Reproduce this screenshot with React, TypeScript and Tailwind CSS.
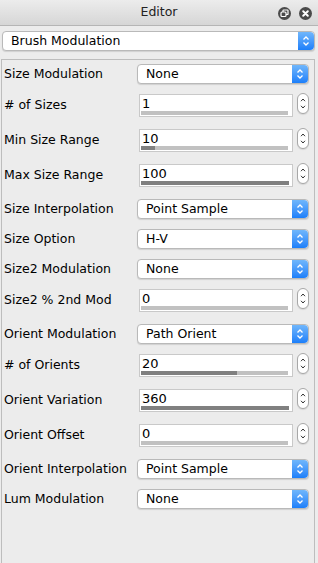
import React from "react";

const font = { fontFamily: '"DejaVu Sans", "Liberation Sans", sans-serif' };

function BlueArrows({ w }: { w: number }) {
  return (
    <div
      className="h-full flex items-center justify-center rounded-r-[4px] bg-gradient-to-b from-[#6fb6fb] to-[#1b7ffa]"
      style={{ width: w }}
    >
      <svg width="8" height="12" viewBox="0 0 8 12">
        <path d="M1.5 4.5 L4 2 L6.5 4.5" stroke="white" strokeWidth="1.3" fill="none" />
        <path d="M1.5 7.5 L4 10 L6.5 7.5" stroke="white" strokeWidth="1.3" fill="none" />
      </svg>
    </div>
  );
}

function Select({ value, className }: { value: string; className: string }) {
  return (
    <div
      className={`flex items-stretch bg-white rounded-[4px] border border-[#b9b9b9] shadow-[0_1px_1px_rgba(0,0,0,0.12)] ${className}`}
    >
      <div className="flex-1 flex items-center pl-[8px] text-[12.5px] text-black leading-none">
        {value}
      </div>
      <BlueArrows w={16} />
    </div>
  );
}

function Stepper() {
  return (
    <div className="w-[12px] h-[21px] rounded-full border border-[#a8a8a8] bg-white flex flex-col items-center justify-center gap-[3px] shadow-[0_1px_1px_rgba(0,0,0,0.1)]">
      <svg width="6" height="4" viewBox="0 0 6 4">
        <path d="M1 3.2 L3 1 L5 3.2" stroke="#333" strokeWidth="1" fill="none" />
      </svg>
      <svg width="6" height="4" viewBox="0 0 6 4">
        <path d="M1 0.8 L3 3 L5 0.8" stroke="#333" strokeWidth="1" fill="none" />
      </svg>
    </div>
  );
}

type Row =
  | { kind: "select"; label: string; value: string }
  | { kind: "num"; label: string; value: string; fill: number };

const rows: Row[] = [
  { kind: "select", label: "Size Modulation", value: "None" },
  { kind: "num", label: "# of Sizes", value: "1", fill: 0 },
  { kind: "num", label: "Min Size Range", value: "10", fill: 14 },
  { kind: "num", label: "Max Size Range", value: "100", fill: 148 },
  { kind: "select", label: "Size Interpolation", value: "Point Sample" },
  { kind: "select", label: "Size Option", value: "H-V" },
  { kind: "select", label: "Size2 Modulation", value: "None" },
  { kind: "num", label: "Size2 % 2nd Mod", value: "0", fill: 0 },
  { kind: "select", label: "Orient Modulation", value: "Path Orient" },
  { kind: "num", label: "# of Orients", value: "20", fill: 96 },
  { kind: "num", label: "Orient Variation", value: "360", fill: 148 },
  { kind: "num", label: "Orient Offset", value: "0", fill: 0 },
  { kind: "select", label: "Orient Interpolation", value: "Point Sample" },
  { kind: "select", label: "Lum Modulation", value: "None" },
];

export default function App() {
  return (
    <div className="w-[318px] h-[563px] overflow-hidden bg-[#ececec] flex flex-col" style={font}>
      {/* title bar */}
      <div className="h-[26px] shrink-0 border-b border-[#b5b5b5] bg-gradient-to-b from-[#ececec] to-[#d6d6d6] flex items-center relative">
        <div className="flex-1 text-center text-[12.5px] text-[#222]">Editor</div>
        <div className="absolute right-[6px] top-[7px] flex gap-[8px]">
          <svg width="13" height="13" viewBox="0 0 13 13">
            <circle cx="6.5" cy="6.5" r="6.5" fill="#4a4a4a" />
            <rect x="3" y="5" width="5" height="4.5" rx="1" stroke="white" strokeWidth="1.2" fill="none" />
            <path d="M5 5 V3.6 Q5 3 5.6 3 H9.4 Q10 3 10 3.6 V6.9 Q10 7.5 9.4 7.5 H8" stroke="white" strokeWidth="1.2" fill="none" />
          </svg>
          <svg width="13" height="13" viewBox="0 0 13 13">
            <circle cx="6.5" cy="6.5" r="6.5" fill="#4a4a4a" />
            <path d="M4.2 4.2 L8.8 8.8 M8.8 4.2 L4.2 8.8" stroke="white" strokeWidth="2" strokeLinecap="round" />
          </svg>
        </div>
      </div>

      <div className="px-[2px] pt-[5px] pr-[3px]">
        <Select value="Brush Modulation" className="h-[20px] w-[313px]" />
      </div>

      {/* group box */}
      <div className="mt-[8px] ml-[1px] mr-[3px] flex-1 border border-[#bdbdbd] border-b-0 pt-[4px] pl-[2px]">
        {rows.map((r, i) =>
          r.kind === "select" ? (
            <div key={i} className="h-[30px] flex items-start">
              <div className="w-[133px] h-[20px] flex items-center text-[12.5px] text-black whitespace-nowrap">
                {r.label}
              </div>
              <Select value={r.value} className="h-[20px] w-[172px]" />
            </div>
          ) : (
            <div key={i} className="h-[35px] flex items-start">
              <div className="w-[135px] h-[23px] flex items-center text-[12.5px] text-black whitespace-nowrap">
                {r.label}
              </div>
              <div className="w-[154px] h-[23px] bg-white border border-[#c9c9c9] px-[1px] pt-[1px] flex flex-col">
                <div className="h-[14px] flex items-end pl-[1px] text-[13px] leading-none text-black">
                  {r.value}
                </div>
                <div className="mt-[1px] mr-[3px] h-[4px] bg-[#c1c1c1]">
                  <div className="h-full bg-[#808080]" style={{ width: r.fill }} />
                </div>
              </div>
              <div className="ml-[4px] -mt-[1px]">
                <Stepper />
              </div>
            </div>
          )
        )}
      </div>
    </div>
  );
}
